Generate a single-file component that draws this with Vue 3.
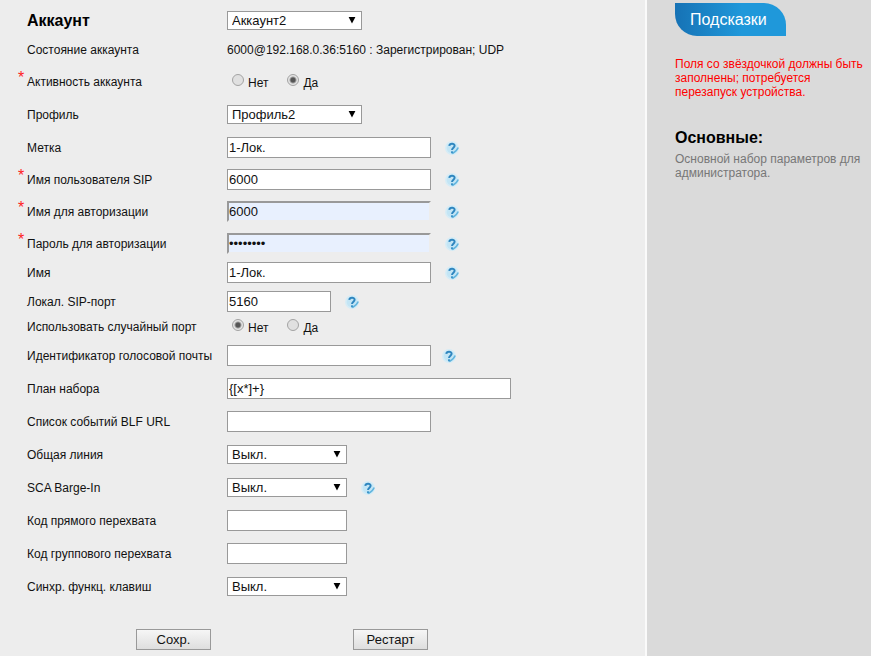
<script setup>
import { reactive } from 'vue'

const rows = reactive([
  { id: 'account', type: 'select', label: 'Аккаунт', value: 'Аккаунт2', options: ['Аккаунт1', 'Аккаунт2'], size: 'medium', gap: 'snug', title: true },
  { id: 'state', type: 'text', label: 'Состояние аккаунта', value: '6000@192.168.0.36:5160 : Зарегистрирован; UDP', gap: 'normal' },
  { id: 'active', type: 'radio', label: 'Активность аккаунта', value: 'Да', required: true, gap: 'wide' },
  { id: 'profile', type: 'select', label: 'Профиль', value: 'Профиль2', options: ['Профиль1', 'Профиль2'], size: 'medium', gap: 'wide' },
  { id: 'label', type: 'input', label: 'Метка', value: '1-Лок.', size: 'long', help: true, gap: 'normal' },
  { id: 'user', type: 'input', label: 'Имя пользователя SIP', value: '6000', size: 'long', help: true, required: true, gap: 'normal' },
  { id: 'auth', type: 'input', label: 'Имя для авторизации', value: '6000', size: 'long', help: true, required: true, filled: true, gap: 'normal' },
  { id: 'password', type: 'input', secret: true, label: 'Пароль для авторизации', value: '60006000', size: 'long', help: true, required: true, filled: true, gap: 'snug' },
  { id: 'name', type: 'input', label: 'Имя', value: '1-Лок.', size: 'long', help: true, gap: 'snug' },
  { id: 'port', type: 'input', label: 'Локал. SIP-порт', value: '5160', size: 'tiny', help: true, gap: 'tight' },
  { id: 'random', type: 'radio', label: 'Использовать случайный порт', value: 'Нет', gap: 'snug' },
  { id: 'voicemail', type: 'input', label: 'Идентификатор голосовой почты', value: '', size: 'long', help: true, close: true, gap: 'wide' },
  { id: 'dialplan', type: 'input', label: 'План набора', value: '{[x*]+}', size: 'full', gap: 'wide' },
  { id: 'blf', type: 'input', label: 'Список событий BLF URL', value: '', size: 'long', gap: 'wide' },
  { id: 'shared', type: 'select', label: 'Общая линия', value: 'Выкл.', options: ['Выкл.', 'Вкл.'], size: 'short', gap: 'wide' },
  { id: 'barge', type: 'select', label: 'SCA Barge-In', value: 'Выкл.', options: ['Выкл.', 'Вкл.'], size: 'short', help: true, gap: 'wide' },
  { id: 'pickup', type: 'input', label: 'Код прямого перехвата', value: '', size: 'short', gap: 'wide' },
  { id: 'group', type: 'input', label: 'Код группового перехвата', value: '', size: 'short', gap: 'wide' },
  { id: 'sync', type: 'select', label: 'Синхр. функц. клавиш', value: 'Выкл.', options: ['Выкл.', 'Вкл.'], size: 'short', gap: 'wide' },
])
</script>

<template>
  <div class="page">
    <main class="content">
      <form @submit.prevent>
        <div v-for="row in rows" :key="row.id" class="row" :class="row.gap">
          <span class="star">{{ row.required ? '*' : '' }}</span>
          <h1 v-if="row.title" class="title"><label :for="row.id">{{ row.label }}</label></h1>
          <span v-else-if="row.type === 'radio' || row.type === 'text'" :id="row.id + '-label'" class="label">{{ row.label }}</span>
          <label v-else class="label" :for="row.id">{{ row.label }}</label>

          <div class="field" :class="{ close: row.close }">
            <output v-if="row.type === 'text'" :aria-labelledby="row.id + '-label'">{{ row.value }}</output>

            <div v-else-if="row.type === 'radio'" class="radios" role="radiogroup" :aria-labelledby="row.id + '-label'">
              <label v-for="option in ['Нет', 'Да']" :key="option" class="radio">
                <input v-model="row.value" type="radio" :name="row.id" :value="option" />
                <span>{{ option }}</span>
              </label>
            </div>

            <span v-else-if="row.type === 'select'" class="select" :class="row.size">
              <select :id="row.id" v-model="row.value">
                <option v-for="option in row.options" :key="option">{{ option }}</option>
              </select>
              <svg class="arrow" viewBox="0 0 8 8" aria-hidden="true"><path d="M0.6 1h6.8L4 7.5z" /></svg>
            </span>

            <input
              v-else
              :id="row.id"
              v-model="row.value"
              class="box"
              :class="[row.size, { filled: row.filled }]"
              :type="row.secret ? 'password' : 'text'"
            />

            <button v-if="row.help" class="help" type="button" aria-label="Справка">
              <svg viewBox="0 0 14 14" aria-hidden="true">
                <circle cx="7" cy="7" r="7" fill="#d6ecf6" />
                <circle cx="7" cy="7" r="5.4" fill="#c3e5f5" />
                <path d="M13.2 6.4Q12 9.8 7.4 12.6" fill="none" stroke="#62b5de" stroke-width="1.5" />
                <path d="M4.3 4.8C4.6 2.2 9.6 2 9.6 4.8C9.6 6.6 7.2 6.8 7 9" fill="none" stroke="#2f86bf" stroke-width="2" />
                <path d="M6 10.3h2.1v2H6z" fill="#3d95ca" />
              </svg>
            </button>
          </div>
        </div>

        <div class="actions">
          <button class="push" type="submit">Сохр.</button>
          <button class="push" type="button">Рестарт</button>
        </div>
      </form>
    </main>

    <aside class="hints">
      <h2 class="badge">Подсказки</h2>
      <p class="warning">Поля со звёздочкой должны быть заполнены; потребуется перезапуск устройства.</p>
      <h3>Основные:</h3>
      <p class="note">Основной набор параметров для администратора.</p>
    </aside>
  </div>
</template>

<style>
body {
  margin: 0;
  background: #ededed;
}
</style>

<style scoped>
.page {
  display: grid;
  grid-template-columns: minmax(0, 1fr) 226px;
  min-height: 100vh;
  font: 12px/14px "Liberation Sans", Arial, sans-serif;
  color: #111;
}
.page * {
  box-sizing: border-box;
}
.content {
  padding: 10px 0 5px;
}
.row {
  display: grid;
  grid-template-columns: 27px 200px minmax(0, 1fr);
  align-items: center;
  min-height: 21px;
}
.wide { margin-bottom: 12px; }
.normal { margin-bottom: 11px; }
.snug { margin-bottom: 8px; }
.tight { margin-bottom: 4px; }

.star {
  align-self: start;
  padding-left: 18px;
  font-size: 16px;
  line-height: 14px;
  color: #f22;
}
.title {
  margin: 0;
  font-size: 16px;
  line-height: 18px;
  color: #000;
}
.label {
  white-space: nowrap;
}
.field {
  display: flex;
  align-items: center;
  gap: 14px;
}
.field.close { gap: 11px; }
.tiny { width: 104px; }
.short { width: 120px; }
.medium { width: 135px; }
.long { width: 204px; }
.full { width: 284px; }

.box {
  height: 21px;
  padding: 0 1px;
  border: 1px solid #999;
  border-radius: 0;
  background: #fff;
  font: 13px "Liberation Sans", Arial, sans-serif;
  color: #111;
}
.box.filled {
  border-width: 2px;
  border-color: #999 #ededed #ededed #999;
  background: #e8f0fe;
  padding: 0;
}
.select {
  display: flex;
  position: relative;
}
.select select {
  appearance: none;
  width: 100%;
  height: 19px;
  padding: 0 16px 0 4px;
  border: 1px solid #999;
  border-radius: 0;
  background: #fff;
  font: 13px/17px "Liberation Sans", Arial, sans-serif;
  color: #111;
}
.arrow {
  position: absolute;
  top: 5px;
  right: 6px;
  width: 8px;
  height: 8px;
  pointer-events: none;
}
.radios {
  display: flex;
  gap: 19px;
  padding-left: 5px;
}
.radio {
  display: flex;
  align-items: flex-start;
  gap: 4px;
}
.radio input {
  appearance: none;
  width: 12px;
  height: 12px;
  margin: 0;
  border: 1px solid #a3a3a3;
  border-radius: 50%;
  background: #e0e0e0;
}
.radio input:checked {
  background: radial-gradient(circle, #555 0 2px, #e4e4e4 4px);
}
.radio span {
  padding-top: 2px;
}
.help {
  width: 14px;
  height: 14px;
  padding: 0;
  border: 0;
  background: none;
}
.help svg {
  display: block;
}
.actions {
  display: flex;
  gap: 142px;
  padding: 20px 0 0 136px;
}
.push {
  width: 75px;
  height: 21px;
  padding: 0;
  border: 1px solid #999;
  border-radius: 0;
  background: linear-gradient(#f6f6f6, #dedede);
  font: 13px "Liberation Sans", Arial, sans-serif;
  color: #111;
}
.hints {
  padding: 3px 4px 0 28px;
  border-left: 2px solid #fafafa;
  background: #dadada;
}
.badge {
  width: 111px;
  margin: 0 0 21px;
  padding: 0 0 0 15px;
  border-radius: 0 22px 0 22px;
  background: linear-gradient(90deg, #1672b5, #1f98da 60%);
  font-size: 16px;
  font-weight: 400;
  line-height: 33px;
  color: #fff;
}
.warning {
  margin: 0 0 30px;
  color: #f00;
}
.hints h3 {
  margin: 0 0 5px;
  font-size: 16px;
  line-height: 18px;
  color: #000;
}
.note {
  margin: 0;
  color: #777;
}
</style>
